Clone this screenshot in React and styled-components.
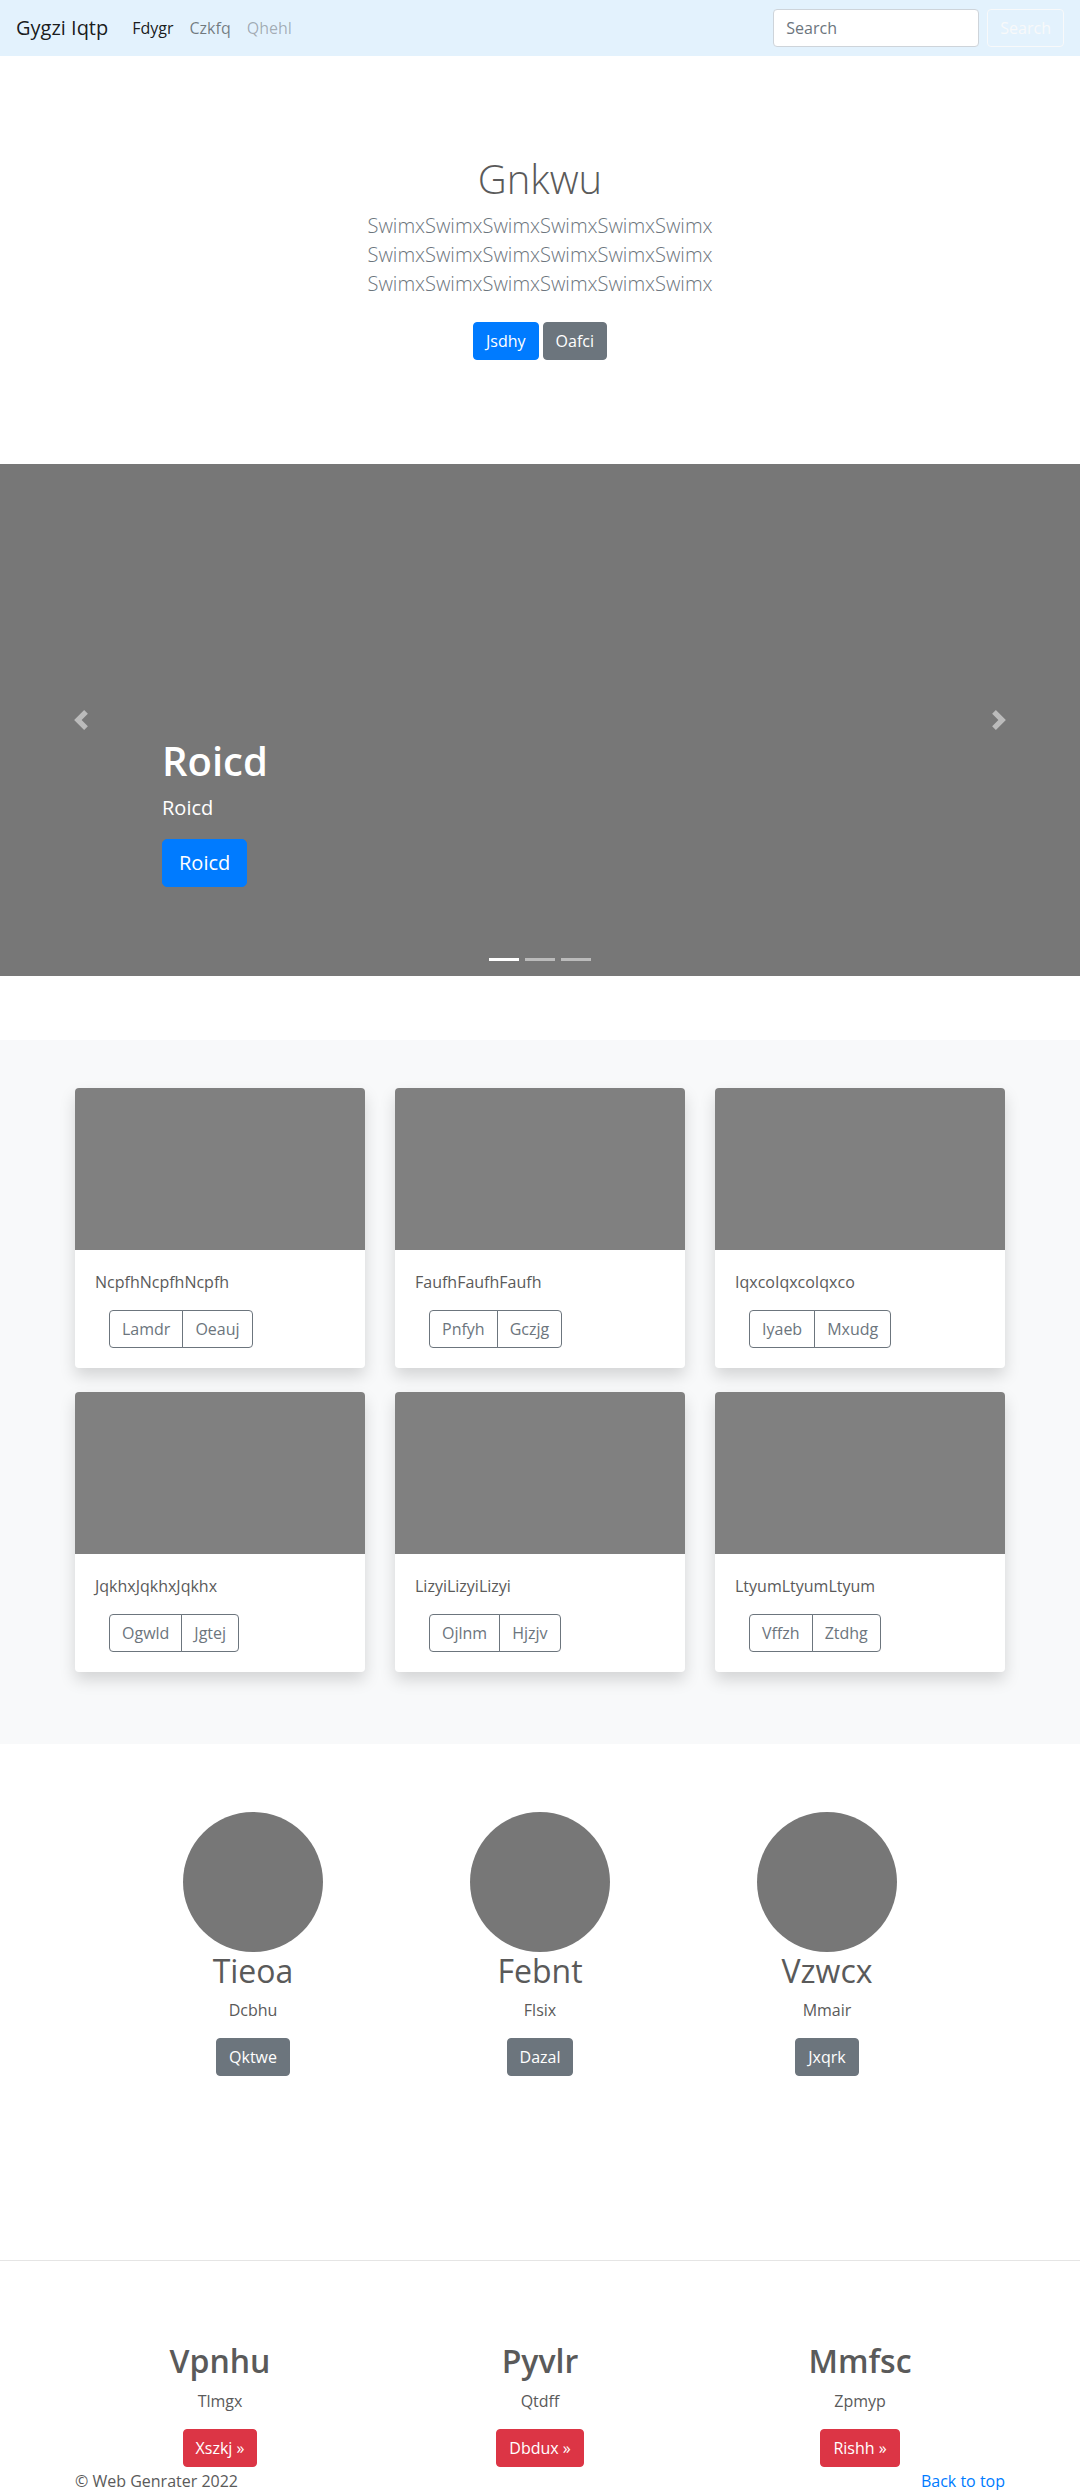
import React from "react";
import styled, { createGlobalStyle, css } from "styled-components";

const GlobalStyle = createGlobalStyle`
  * { box-sizing: border-box; }
  body {
    margin: 0;
    font-family: "Open Sans", "Noto Sans", Arial, sans-serif;
    font-size: 16px;
    line-height: 1.5;
    color: #5a5a5a;
    background: #fff;
  }
  h1, h2, p { margin: 0; }
`;

/* ---------- buttons ---------- */
const variants = {
  primary: css`background:#007bff;border-color:#007bff;color:#fff;`,
  secondary: css`background:#6c757d;border-color:#6c757d;color:#fff;`,
  danger: css`background:#dc3545;border-color:#dc3545;color:#fff;`,
  outlineSecondary: css`background:transparent;border-color:#6c757d;color:#6c757d;`,
  outlineLight: css`background:transparent;border-color:#f8f9fa;color:#f8f9fa;`,
};

const Btn = styled.a`
  display: inline-block;
  font-family: inherit;
  font-size: ${(p) => (p.$lg ? "20px" : "16px")};
  line-height: 1.5;
  padding: ${(p) => (p.$lg ? "8px 16px" : "6px 12px")};
  border: 1px solid transparent;
  border-radius: ${(p) => (p.$lg ? "5px" : "4px")};
  text-decoration: none;
  cursor: pointer;
  white-space: nowrap;
  ${(p) => variants[p.$variant || "primary"]}
`;

/* ---------- navbar ---------- */
const Navbar = styled.nav`
  display: flex;
  align-items: center;
  height: 56px;
  padding: 8px 16px;
  background: #e3f2fd;
`;
const Brand = styled.a`
  font-size: 20px;
  line-height: 1.5;
  color: rgba(0, 0, 0, 0.9);
  margin-right: 16px;
  text-decoration: none;
`;
const NavList = styled.div`
  display: flex;
  flex: 1;
`;
const NavLink = styled.a`
  padding: 8px;
  text-decoration: none;
  color: ${(p) =>
    p.$state === "active"
      ? "rgba(0,0,0,0.9)"
      : p.$state === "disabled"
      ? "rgba(0,0,0,0.3)"
      : "rgba(0,0,0,0.5)"};
`;
const SearchForm = styled.form`
  display: flex;
  align-items: center;
  gap: 8px;
`;
const SearchInput = styled.input`
  width: 206px;
  height: 38px;
  padding: 6px 12px;
  font: inherit;
  font-size: 16px;
  color: #495057;
  background: #fff;
  border: 1px solid #ced4da;
  border-radius: 4px;
  &::placeholder { color: #6c757d; }
`;

/* ---------- hero ---------- */
const Hero = styled.section`
  text-align: center;
  padding: 99px 0 96px;
`;
const HeroTitle = styled.h1`
  font-size: 40px;
  font-weight: 300;
  line-height: 1.2;
  margin-bottom: 8px;
`;
const Lead = styled.p`
  font-size: 20px;
  font-weight: 300;
  line-height: 29px;
  color: #6c757d;
  margin-bottom: 16px;
`;
const ButtonRow = styled.div`
  display: flex;
  justify-content: center;
  gap: 4px;
  padding: 8px 0;
`;

/* ---------- carousel ---------- */
const Carousel = styled.div`
  position: relative;
  display: grid;
  grid-template-columns: 15% 1fr 15%;
  height: 512px;
  background: #777;
  margin-bottom: 64px;
`;
const Control = styled.div`
  display: flex;
  align-items: center;
  justify-content: center;
  opacity: 0.5;
`;
const Caption = styled.div`
  align-self: end;
  padding: 20px 0;
  margin-bottom: 53px;
  color: #fff;
`;
const CaptionTitle = styled.h1`
  font-size: 40px;
  font-weight: 600;
  line-height: 1.2;
  margin-bottom: 8px;
`;
const CaptionText = styled.p`
  font-size: 20px;
  line-height: 30px;
  margin-bottom: 16px;
`;
const CaptionAction = styled.p`
  margin-bottom: 16px;
  line-height: 0;
`;
const Indicators = styled.ol`
  position: absolute;
  left: 0;
  right: 0;
  bottom: 15px;
  display: flex;
  justify-content: center;
  gap: 6px;
  margin: 0;
  padding: 0;
  list-style: none;
`;
const Indicator = styled.li`
  width: 30px;
  height: 3px;
  background: ${(p) => (p.$active ? "#fff" : "rgba(255,255,255,0.5)")};
`;

/* ---------- album ---------- */
const Album = styled.section`
  background: #f8f9fa;
  padding: 48px 0 72px;
`;
const CardGrid = styled.div`
  width: 930px;
  margin: 0 auto;
  display: grid;
  grid-template-columns: repeat(3, 1fr);
  column-gap: 30px;
  row-gap: 24px;
`;
const Card = styled.div`
  background: #fff;
  border-radius: 4px;
  overflow: hidden;
  box-shadow: 0 8px 16px rgba(0, 0, 0, 0.15);
`;
const CardImage = styled.div`
  height: 162px;
  background: #808080;
`;
const CardBody = styled.div`
  padding: 20px;
`;
const CardText = styled.p`
  font-size: 16px;
  line-height: 24px;
  margin-bottom: 16px;
`;
const BtnGroup = styled.div`
  display: inline-flex;
  margin-left: 14px;
  & > ${Btn}:first-child { border-top-right-radius: 0; border-bottom-right-radius: 0; }
  & > ${Btn}:last-child { border-top-left-radius: 0; border-bottom-left-radius: 0; margin-left: -1px; }
`;

/* ---------- marketing ---------- */
const Marketing = styled.section`
  margin-top: 68px;
  display: grid;
  grid-template-columns: repeat(3, 287px);
  justify-content: center;
`;
const Column = styled.div`
  display: flex;
  flex-direction: column;
  align-items: center;
  text-align: center;
`;
const Avatar = styled.div`
  width: 140px;
  height: 140px;
  border-radius: 50%;
  background: #777;
`;
const PersonName = styled.h2`
  font-size: 32px;
  font-weight: 400;
  line-height: 1.2;
  margin-bottom: 8px;
`;
const SmallText = styled.p`
  font-size: 16px;
  line-height: 24px;
  margin-bottom: 16px;
`;

const Divider = styled.hr`
  margin: 184px 0 0;
  border: 0;
  border-top: 1px solid #e5e5e5;
`;

const Features = styled.section`
  width: 960px;
  margin: 81px auto 0;
  display: grid;
  grid-template-columns: repeat(3, 1fr);
`;
const FeatureTitle = styled.h2`
  font-size: 32px;
  font-weight: 600;
  line-height: 1.2;
  margin-bottom: 8px;
`;

const Footer = styled.footer`
  width: 930px;
  margin: 2px auto 0;
  display: flex;
  justify-content: space-between;
  padding-bottom: 48px;
`;
const TopLink = styled.a`
  color: #007bff;
  text-decoration: none;
`;

const Chevron = ({ dir }) => (
  <svg width="20" height="20" viewBox="0 0 8 8" fill="#fff">
    {dir === "prev" ? (
      <path d="M5.25 0l-4 4 4 4 1.5-1.5L4.25 4l2.5-2.5L5.25 0z" />
    ) : (
      <path d="M2.75 0l-1.5 1.5L3.75 4l-2.5 2.5L2.75 8l4-4-4-4z" />
    )}
  </svg>
);

const cards = [
  ["NcpfhNcpfhNcpfh", "Lamdr", "Oeauj"],
  ["FaufhFaufhFaufh", "Pnfyh", "Gczjg"],
  ["IqxcoIqxcoIqxco", "Iyaeb", "Mxudg"],
  ["JqkhxJqkhxJqkhx", "Ogwld", "Jgtej"],
  ["LizyiLizyiLizyi", "Ojlnm", "Hjzjv"],
  ["LtyumLtyumLtyum", "Vffzh", "Ztdhg"],
];

const people = [
  ["Tieoa", "Dcbhu", "Qktwe"],
  ["Febnt", "Flsix", "Dazal"],
  ["Vzwcx", "Mmair", "Jxqrk"],
];

const features = [
  ["Vpnhu", "Tlmgx", "Xszkj »"],
  ["Pyvlr", "Qtdff", "Dbdux »"],
  ["Mmfsc", "Zpmyp", "Rishh »"],
];

const swim = "SwimxSwimxSwimxSwimxSwimxSwimx";

export default function App() {
  return (
    <>
      <GlobalStyle />
      <Navbar>
        <Brand href="#">Gygzi Iqtp</Brand>
        <NavList>
          <NavLink $state="active" href="#">Fdygr</NavLink>
          <NavLink href="#">Czkfq</NavLink>
          <NavLink $state="disabled" href="#">Qhehl</NavLink>
        </NavList>
        <SearchForm onSubmit={(e) => e.preventDefault()}>
          <SearchInput placeholder="Search" />
          <Btn as="button" type="submit" $variant="outlineLight">Search</Btn>
        </SearchForm>
      </Navbar>

      <Hero>
        <HeroTitle>Gnkwu</HeroTitle>
        <Lead>
          {swim}
          <br />
          {swim}
          <br />
          {swim}
        </Lead>
        <ButtonRow>
          <Btn $variant="primary">Jsdhy</Btn>
          <Btn $variant="secondary">Oafci</Btn>
        </ButtonRow>
      </Hero>

      <Carousel>
        <Control>
          <Chevron dir="prev" />
        </Control>
        <Caption>
          <CaptionTitle>Roicd</CaptionTitle>
          <CaptionText>Roicd</CaptionText>
          <CaptionAction>
            <Btn $lg $variant="primary">Roicd</Btn>
          </CaptionAction>
        </Caption>
        <Control>
          <Chevron dir="next" />
        </Control>
        <Indicators>
          <Indicator $active />
          <Indicator />
          <Indicator />
        </Indicators>
      </Carousel>

      <Album>
        <CardGrid>
          {cards.map(([text, a, b]) => (
            <Card key={text}>
              <CardImage />
              <CardBody>
                <CardText>{text}</CardText>
                <BtnGroup>
                  <Btn $variant="outlineSecondary">{a}</Btn>
                  <Btn $variant="outlineSecondary">{b}</Btn>
                </BtnGroup>
              </CardBody>
            </Card>
          ))}
        </CardGrid>
      </Album>

      <Marketing>
        {people.map(([name, sub, btn]) => (
          <Column key={name}>
            <Avatar />
            <PersonName>{name}</PersonName>
            <SmallText>{sub}</SmallText>
            <Btn $variant="secondary">{btn}</Btn>
          </Column>
        ))}
      </Marketing>

      <Divider />

      <Features>
        {features.map(([title, sub, btn]) => (
          <Column key={title}>
            <FeatureTitle>{title}</FeatureTitle>
            <SmallText>{sub}</SmallText>
            <Btn $variant="danger">{btn}</Btn>
          </Column>
        ))}
      </Features>

      <Footer>
        <p>© Web Genrater 2022</p>
        <TopLink href="#">Back to top</TopLink>
      </Footer>
    </>
  );
}
